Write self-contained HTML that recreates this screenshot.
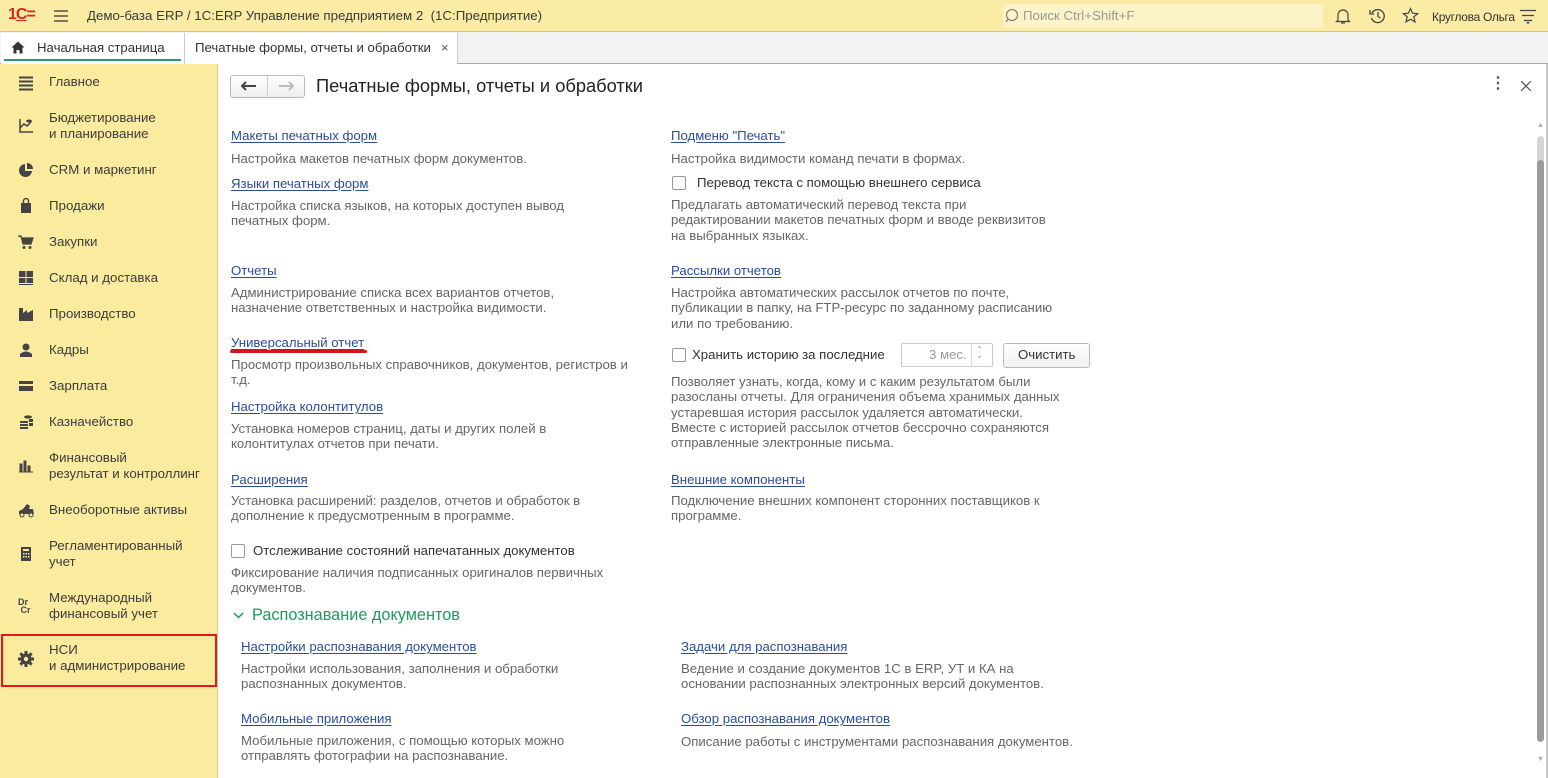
<!DOCTYPE html>
<html><head><meta charset="utf-8"><style>
*{margin:0;padding:0;box-sizing:border-box}
body{width:1548px;height:778px;overflow:hidden;background:#fff;font-family:"Liberation Sans","Noto Sans CJK SC",sans-serif;font-size:13.2px;color:#333;position:relative}
.a{position:absolute;white-space:nowrap;line-height:16px}
.l{color:#2a4e99;text-decoration:underline;text-decoration-color:#2a4e99;text-underline-offset:2px}
.d{color:#666;font-size:13.2px;line-height:15.3px}
.cb{position:absolute;width:14px;height:14px;border:1px solid #999;border-radius:2px;background:#fff}
.s{position:absolute;left:49px;font-size:13.3px;color:#3c3c3c;line-height:16px;white-space:nowrap}
.ic{position:absolute;left:18px;width:16px;height:16px}
</style></head><body>
<!-- top bar -->
<div style="position:absolute;left:0;top:0;width:1548px;height:32px;background:#fbeca5;border-bottom:1px solid #d8c77a"></div>
<div class="a" style="left:8px;top:7px;font-weight:bold;color:#d8261c;font-size:16px;letter-spacing:-1px">1<span style="text-decoration:underline">С</span>=</div>
<svg style="position:absolute;left:54px;top:10px" width="14" height="12"><path d="M0 1H14M0 6H14M0 11H14" stroke="#333" stroke-width="1.3"/></svg>
<div class="a" style="left:87px;top:8px;color:#3a3a3a;font-size:13.3px">Демо-база ERP / 1С:ERP Управление предприятием 2&nbsp; (1С:Предприятие)</div>
<div style="position:absolute;left:1003px;top:4px;width:320px;height:24px;background:#fdf3c8"></div>
<svg style="position:absolute;left:1005px;top:8px" width="16" height="16"><circle cx="7" cy="7" r="5.5" fill="none" stroke="#888" stroke-width="1.3"/><path d="M3 11L1 14" stroke="#888" stroke-width="1.3"/></svg>
<div class="a" style="left:1023px;top:8px;color:#999;font-size:13.3px">Поиск Ctrl+Shift+F</div>
<svg style="position:absolute;left:1335px;top:8px" width="16" height="17"><path d="M3 12V7a5 5 0 0110 0v5l1.5 1.5h-13z M6 15h4" fill="none" stroke="#444" stroke-width="1.2"/></svg>
<svg style="position:absolute;left:1369px;top:8px" width="17" height="16"><path d="M3 5A6.5 6.5 0 1 1 2.5 10" fill="none" stroke="#444" stroke-width="1.3"/><path d="M1 2V6H5" fill="none" stroke="#444" stroke-width="1.3"/><path d="M9 4V8.5L11.5 10" fill="none" stroke="#444" stroke-width="1.3"/></svg>
<svg style="position:absolute;left:1402px;top:7px" width="17" height="17"><path d="M8.5 1.5L10.6 6.2 15.7 6.6 11.8 9.9 13 14.9 8.5 12.2 4 14.9 5.2 9.9 1.3 6.6 6.4 6.2Z" fill="none" stroke="#444" stroke-width="1.2"/></svg>
<div class="a" style="left:1432px;top:9px;font-size:12px;color:#333;letter-spacing:-0.3px">Круглова Ольга</div>
<svg style="position:absolute;left:1519px;top:9px" width="18" height="16"><path d="M1 1.5H17M3 6.5H15M5 11.5H13" stroke="#444" stroke-width="1.3"/><path d="M7 13L9 15 11 13Z" fill="#444"/></svg>
<!-- tabs -->
<div style="position:absolute;left:0;top:32px;width:1548px;height:32px;background:#f2f2f2;border-bottom:1px solid #a8a8a8"></div>
<div style="position:absolute;left:1px;top:33px;width:183px;height:31px;background:#fff"></div>
<div style="position:absolute;left:4px;top:59px;width:177px;height:2px;background:#2b9a6f"></div>
<svg style="position:absolute;left:11px;top:41px" width="14" height="13"><path d="M7 0.5L0.5 6.5H2.5V12.5H5.5V9H8.5V12.5H11.5V6.5H13.5Z" fill="#333"/></svg>
<div class="a" style="left:37px;top:40px;color:#333">Начальная страница</div>
<div style="position:absolute;left:184px;top:33px;width:274px;height:31px;background:#fff;border-left:1px solid #ccc;border-right:1px solid #ccc"></div>
<div class="a" style="left:195px;top:40px;color:#333">Печатные формы, отчеты и обработки</div>
<div class="a" style="left:441px;top:40px;color:#555;font-size:13px">×</div>
<!-- sidebar -->
<div style="position:absolute;left:0;top:64px;width:218px;height:714px;background:#fbeb9e;border-right:1px solid #d9c98a"></div>
<svg class="ic" style="top:75px" width="16" height="16"><path d="M1 2.5H15M1 6.5H15M1 10.5H15M1 14.5H15" stroke="#444" stroke-width="2"/></svg>
<div class="s" style="top:74px">Главное</div>
<svg class="ic" style="top:118px" width="16" height="16"><path d="M2 1V14H15M2 10L6 6 9 8 13 4" fill="none" stroke="#444" stroke-width="1.5"/><ellipse cx="11" cy="3" rx="3" ry="1.5" fill="#444"/></svg>
<div class="s" style="top:110px">Бюджетирование<br>и планирование</div>
<svg class="ic" style="top:162px" width="16" height="16"><path d="M7 2A6.5 6.5 0 1 0 14 9H7Z M9 1V7H15A6 6 0 0 0 9 1Z" fill="#444"/></svg>
<div class="s" style="top:162px">CRM и маркетинг</div>
<svg class="ic" style="top:198px" width="16" height="16"><path d="M3 5H13V15H3Z" fill="#444"/><path d="M5.5 5V3a2.5 2.5 0 015 0v2" fill="none" stroke="#444" stroke-width="1.4"/></svg>
<div class="s" style="top:198px">Продажи</div>
<svg class="ic" style="top:234px" width="16" height="16"><path d="M0 2H3L5 10H13L15 4H4" fill="#444" stroke="#444" stroke-width="1.2"/><circle cx="6" cy="13.5" r="1.5" fill="#444"/><circle cx="12" cy="13.5" r="1.5" fill="#444"/></svg>
<div class="s" style="top:234px">Закупки</div>
<svg class="ic" style="top:270px" width="16" height="16"><path d="M1 1H7.5V7H1ZM8.5 1H15V7H8.5ZM1 8H7.5V13H1ZM8.5 8H15V13H8.5ZM1 14H15V15H1Z" fill="#444"/></svg>
<div class="s" style="top:270px">Склад и доставка</div>
<svg class="ic" style="top:306px" width="16" height="16"><path d="M1 15V2H5V7L9 4V7L15 4V15Z" fill="#444"/></svg>
<div class="s" style="top:306px">Производство</div>
<svg class="ic" style="top:342px" width="16" height="16"><circle cx="8" cy="5" r="3.5" fill="#444"/><path d="M2 15V12Q8 7 14 12V15Z" fill="#444"/></svg>
<div class="s" style="top:342px">Кадры</div>
<svg class="ic" style="top:378px" width="16" height="16"><path d="M1 3H15V6H1ZM1 8H15V13H1Z" fill="#444"/></svg>
<div class="s" style="top:378px">Зарплата</div>
<svg class="ic" style="top:414px" width="16" height="16"><ellipse cx="10" cy="3" rx="4" ry="1.6" fill="#444"/><path d="M2 7H10V9H2ZM2 10H10V12H2ZM2 13H10V15H2ZM11 5H15V8H11ZM11 9H15V12H11Z" fill="#444"/></svg>
<div class="s" style="top:414px">Казначейство</div>
<svg class="ic" style="top:458px" width="16" height="16"><path d="M1 14H15M2 6H4V13H2ZM6 3H8V13H6ZM10 8H12V13H10Z" fill="#444" stroke="#444" stroke-width="1"/></svg>
<div class="s" style="top:450px">Финансовый<br>результат и контроллинг</div>
<svg class="ic" style="top:502px" width="17" height="16"><path d="M1 12V9L5 7 9 2 12 4 11 7H15L16 12Z" fill="#444"/><circle cx="4" cy="13" r="2" fill="#fbeb9e" stroke="#444"/><circle cx="13" cy="13" r="2" fill="#fbeb9e" stroke="#444"/></svg>
<div class="s" style="top:502px">Внеоборотные активы</div>
<svg class="ic" style="top:546px" width="16" height="16"><path d="M3 1H13V15H3Z" fill="#444"/><path d="M5 3H11V5H5Z" fill="#fbeb9e"/><path d="M5 7H6.5V8.5H5ZM7.5 7H9V8.5H7.5ZM10 7H11.5V8.5H10ZM5 10H6.5V11.5H5ZM7.5 10H9V11.5H7.5ZM10 10H11.5V11.5H10Z" fill="#fbeb9e"/></svg>
<div class="s" style="top:538px">Регламентированный<br>учет</div>
<div class="a" style="left:18px;top:598px;font-size:9px;line-height:8px;font-weight:bold;color:#444">Dr<br>&nbsp;Cr</div>
<div class="s" style="top:590px">Международный<br>финансовый учет</div>
<div style="position:absolute;left:1px;top:634px;width:216px;height:53px;border:2px solid #e8141c"></div>
<svg class="ic" style="top:651px" width="16" height="16"><g fill="#444"><circle cx="8" cy="8" r="5.5"/><path d="M6.5 0H9.5V16H6.5ZM0 6.5H16V9.5H0Z"/><path d="M6.5 0H9.5V16H6.5Z" transform="rotate(45 8 8)"/><path d="M6.5 0H9.5V16H6.5Z" transform="rotate(-45 8 8)"/></g><circle cx="8" cy="8" r="2.2" fill="#fbeb9e"/></svg>
<div class="s" style="top:642px">НСИ<br>и администрирование</div>
<!-- header -->
<div style="position:absolute;left:230px;top:75px;width:75px;height:23px;border:1px solid #bbb;border-radius:3px;background:linear-gradient(#fff,#eee)"></div>
<div style="position:absolute;left:267px;top:76px;width:1px;height:21px;background:#ccc"></div>
<svg style="position:absolute;left:241px;top:81px" width="16" height="10"><path d="M1 5H15M5 1L1 5 5 9" fill="none" stroke="#444" stroke-width="2"/></svg>
<svg style="position:absolute;left:278px;top:81px" width="16" height="10"><path d="M1 5H15M11 1L15 5 11 9" fill="none" stroke="#bbb" stroke-width="2"/></svg>
<div class="a" style="left:316px;top:75px;font-size:18.3px;line-height:22px;color:#222">Печатные формы, отчеты и обработки</div>
<div class="a" style="left:1490px;top:76px;font-size:16px;color:#555;font-weight:bold">⋮</div>
<svg style="position:absolute;left:1521px;top:81px" width="10" height="10"><path d="M0 0L10 10M10 0L0 10" stroke="#555" stroke-width="1.2"/></svg>
<!-- scrollbar -->
<div style="position:absolute;left:1537px;top:136px;width:7px;height:40px;background:#d5d5d5;border-radius:4px 4px 0 0"></div>
<div style="position:absolute;left:1537px;top:160px;width:7px;height:582px;background:#9b9b9b;border-radius:4px"></div>
<div class="a" style="left:1537px;top:118px;font-size:7px;color:#aaa">▲</div>
<div class="a" style="left:1537px;top:752px;font-size:7px;color:#aaa">▼</div>
<div style="position:absolute;left:1546px;top:64px;width:2px;height:714px;background:#ccc"></div>
<!-- left column -->
<div class="a l" style="left:231px;top:128px">Макеты печатных форм</div>
<div class="a d" style="left:231px;top:151px">Настройка макетов печатных форм документов.</div>
<div class="a l" style="left:231px;top:176px">Языки печатных форм</div>
<div class="a d" style="left:231px;top:198px">Настройка списка языков, на которых доступен вывод<br>печатных форм.</div>
<div class="a l" style="left:231px;top:263px">Отчеты</div>
<div class="a d" style="left:231px;top:285px">Администрирование списка всех вариантов отчетов,<br>назначение ответственных и настройка видимости.</div>
<div class="a l" style="left:231px;top:335px">Универсальный отчет</div>
<div style="position:absolute;left:230px;top:350px;width:137px;height:3px;background:#d81418;border-radius:2px"></div>
<div class="a d" style="left:231px;top:357px">Просмотр произвольных справочников, документов, регистров и<br>т.д.</div>
<div class="a l" style="left:231px;top:399px">Настройка колонтитулов</div>
<div class="a d" style="left:231px;top:421px">Установка номеров страниц, даты и других полей в<br>колонтитулах отчетов при печати.</div>
<div class="a l" style="left:231px;top:472px">Расширения</div>
<div class="a d" style="left:231px;top:493px">Установка расширений: разделов, отчетов и обработок в<br>дополнение к предусмотренным в программе.</div>
<div class="cb" style="left:231px;top:544px"></div>
<div class="a" style="left:253px;top:543px">Отслеживание состояний напечатанных документов</div>
<div class="a d" style="left:231px;top:565px">Фиксирование наличия подписанных оригиналов первичных<br>документов.</div>
<svg style="position:absolute;left:233px;top:612px" width="11" height="7"><path d="M1 1L5.5 5.5 10 1" fill="none" stroke="#1f9a5e" stroke-width="1.5"/></svg>
<div class="a" style="left:252px;top:606px;font-size:16.3px;line-height:19px;color:#1f9a5e">Распознавание документов</div>
<div class="a l" style="left:241px;top:639px">Настройки распознавания документов</div>
<div class="a d" style="left:241px;top:661px">Настройки использования, заполнения и обработки<br>распознанных документов.</div>
<div class="a l" style="left:241px;top:711px">Мобильные приложения</div>
<div class="a d" style="left:241px;top:733px">Мобильные приложения, с помощью которых можно<br>отправлять фотографии на распознавание.</div>
<!-- right column -->
<div class="a l" style="left:671px;top:128px">Подменю "Печать"</div>
<div class="a d" style="left:671px;top:151px">Настройка видимости команд печати в формах.</div>
<div class="cb" style="left:672px;top:176px"></div>
<div class="a" style="left:697px;top:175px">Перевод текста с помощью внешнего сервиса</div>
<div class="a d" style="left:671px;top:197px">Предлагать автоматический перевод текста при<br>редактировании макетов печатных форм и вводе реквизитов<br>на выбранных языках.</div>
<div class="a l" style="left:671px;top:263px">Рассылки отчетов</div>
<div class="a d" style="left:671px;top:285px">Настройка автоматических рассылок отчетов по почте,<br>публикации в папку, на FTP-ресурс по заданному расписанию<br>или по требованию.</div>
<div class="cb" style="left:672px;top:348px"></div>
<div class="a" style="left:692px;top:347px">Хранить историю за последние</div>
<div style="position:absolute;left:901px;top:343px;width:92px;height:24px;border:1px solid #ccc;border-radius:2px;background:#fff"></div>
<div style="position:absolute;left:971px;top:344px;width:1px;height:22px;background:#ddd"></div>
<div class="a" style="left:929px;top:347px;color:#999">3 мес.</div>
<div class="a" style="left:978px;top:342px;font-size:6px;color:#bbb;line-height:11px">▴<br>▾</div>
<div style="position:absolute;left:1003px;top:343px;width:87px;height:25px;border:1px solid #bbb;border-radius:3px;background:linear-gradient(#fff,#f0f0f0)"></div>
<div class="a" style="left:1018px;top:347px;color:#333">Очистить</div>
<div class="a d" style="left:671px;top:374px">Позволяет узнать, когда, кому и с каким результатом были<br>разосланы отчеты. Для ограничения объема хранимых данных<br>устаревшая история рассылок удаляется автоматически.<br>Вместе с историей рассылок отчетов бессрочно сохраняются<br>отправленные электронные письма.</div>
<div class="a l" style="left:671px;top:472px">Внешние компоненты</div>
<div class="a d" style="left:671px;top:493px">Подключение внешних компонент сторонних поставщиков к<br>программе.</div>
<div class="a l" style="left:681px;top:639px">Задачи для распознавания</div>
<div class="a d" style="left:681px;top:661px">Ведение и создание документов 1С в ERP, УТ и КА на<br>основании распознанных электронных версий документов.</div>
<div class="a l" style="left:681px;top:711px">Обзор распознавания документов</div>
<div class="a d" style="left:681px;top:734px">Описание работы с инструментами распознавания документов.</div>
</body></html>
